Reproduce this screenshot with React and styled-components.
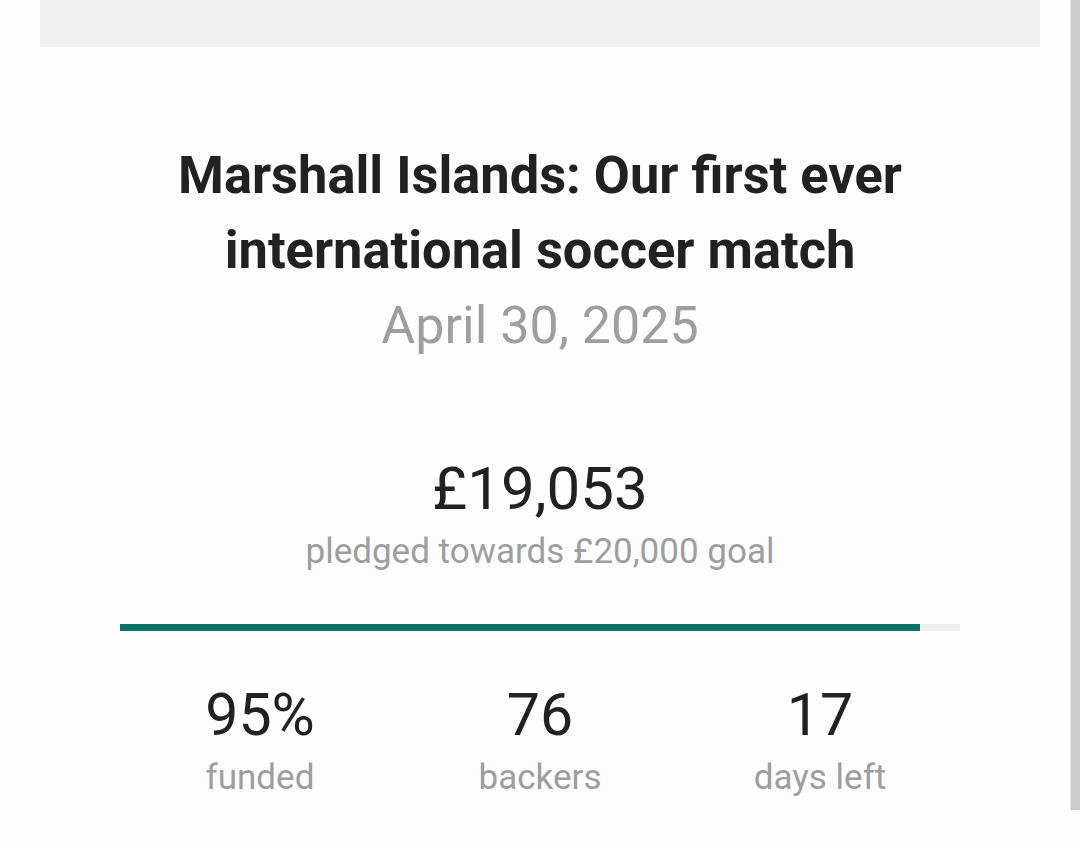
import React from 'react';
import styled, { createGlobalStyle } from 'styled-components';

const GlobalStyle = createGlobalStyle`
  html, body {
    margin: 0;
    padding: 0;
    background: #fdfdfd;
  }
  body {
    font-family: Roboto, "Noto Sans", "Liberation Sans", sans-serif;
    color: #212121;
  }
`;

const project = {
  date: 'April 30, 2025',
  pledged: 19053,
  goal: 20000,
  backers: 76,
  daysLeft: 17,
};

const stats = [
  { value: '95%', label: 'funded' },
  { value: project.backers, label: 'backers' },
  { value: project.daysLeft, label: 'days left' },
];

const App = () => {
  const percent = Math.min(100, (project.pledged / project.goal) * 100);

  return (
    <Page>
      <GlobalStyle />
      <Card>
        <HeaderStrip />
        <Body>
          <Title>
            Marshall Islands: Our first ever
            <br />
            international soccer match
          </Title>
          <DateLine>{project.date}</DateLine>

          <Amount>£{project.pledged.toLocaleString('en-GB')}</Amount>
          <Caption>pledged towards £{project.goal.toLocaleString('en-GB')} goal</Caption>

          <Track>
            <Fill style={{ width: `${percent}%` }} />
          </Track>

          <StatsRow>
            {stats.map((s) => (
              <Stat key={s.label}>
                <StatValue>{s.value}</StatValue>
                <StatLabel>{s.label}</StatLabel>
              </Stat>
            ))}
          </StatsRow>
        </Body>
      </Card>
      <ScrollThumb />
    </Page>
  );
};

const Page = styled.div`
  position: relative;
  width: 1080px;
  height: 848px;
  overflow: hidden;
`;

const Card = styled.div`
  width: 1000px;
  margin: 0 auto;
`;

const HeaderStrip = styled.div`
  height: 45px;
  background: #efefef;
  border-bottom: 2px solid #f3f3f3;
`;

const Body = styled.div`
  padding: 91px 80px 0;
  display: flex;
  flex-direction: column;
  align-items: center;
  text-align: center;
`;

const Title = styled.h1`
  margin: 0;
  font-size: 52.4px;
  font-weight: 700;
  line-height: 75px;
  color: #212121;
`;

const DateLine = styled.div`
  font-size: 52px;
  line-height: 75px;
  color: #9e9e9e;
`;

const Amount = styled.div`
  margin-top: 91px;
  font-size: 60px;
  line-height: 70px;
  color: #212121;
`;

const Caption = styled.div`
  margin-top: 6px;
  font-size: 35px;
  line-height: 44px;
  color: #9e9e9e;
`;

const Track = styled.div`
  align-self: stretch;
  margin-top: 50px;
  height: 7px;
  background: #eeeeee;
`;

const Fill = styled.div`
  height: 100%;
  background: #077463;
`;

const StatsRow = styled.div`
  align-self: stretch;
  margin-top: 49px;
  display: grid;
  grid-template-columns: repeat(3, 1fr);
`;

const Stat = styled.div`
  display: flex;
  flex-direction: column;
  align-items: center;
`;

const StatValue = styled.div`
  font-size: 59px;
  line-height: 70px;
  color: #212121;
`;

const StatLabel = styled.div`
  margin-top: 6px;
  font-size: 35px;
  line-height: 44px;
  color: #9e9e9e;
`;

const ScrollThumb = styled.div`
  position: absolute;
  top: 0;
  right: 0;
  width: 9px;
  height: 810px;
  background: #cccccc;
  border-left: 1px solid #e6e6e6;
`;

export default App;
